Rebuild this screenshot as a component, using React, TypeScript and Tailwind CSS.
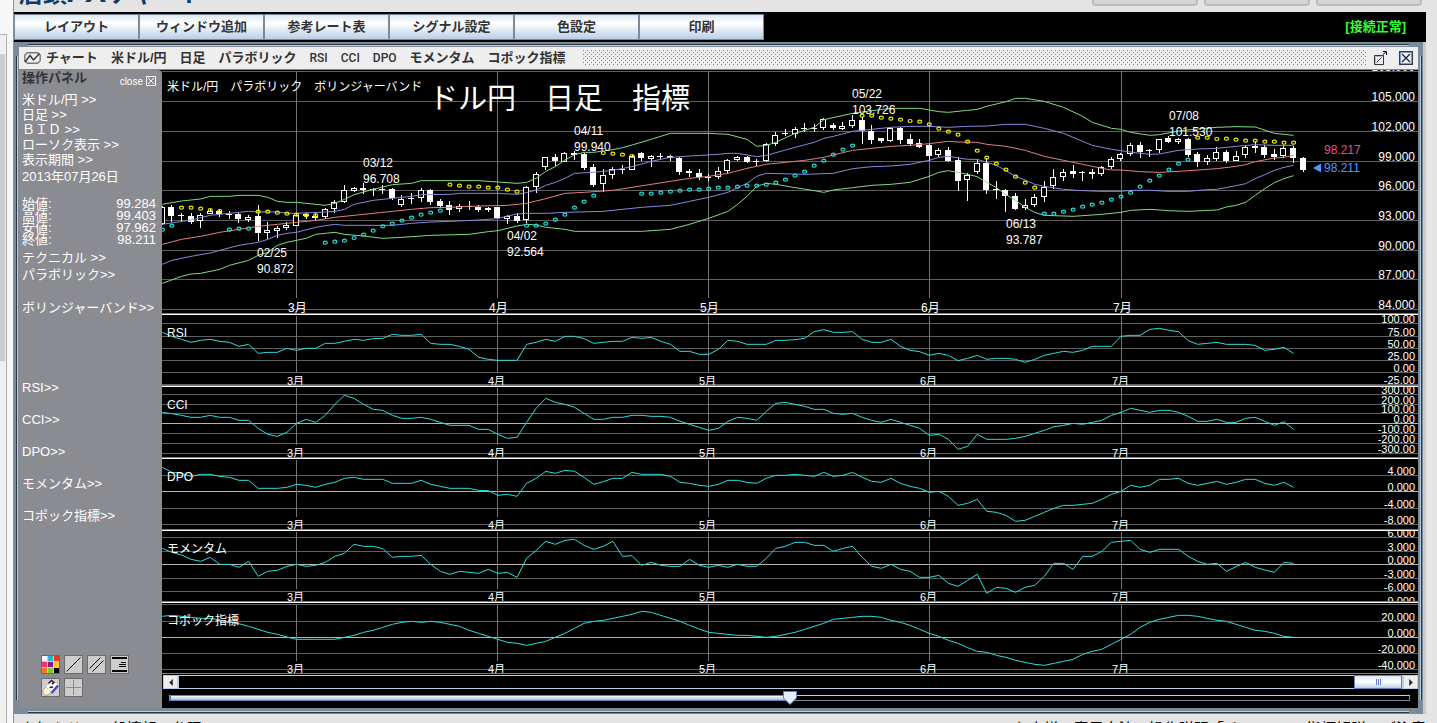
import React, { useState } from 'react';

type Candle = [high: number, low: number, top: number, bottom: number, filled: 0 | 1];
type Point = [bar: number, y: number];

interface Grid {
  y: number;
  label: string;
  strong?: boolean;
}

interface Indicator {
  name: string;
  base: number;
  grid: Grid[];
  samples: number[];
}

// Horizontal position of a daily bar. All chart samples are stored in thirds of a pixel.
const barX = (i: number) => 0.3 + i * 9.587;

const months = [
  { label: '3月', x: 134 },
  { label: '4月', x: 335 },
  { label: '5月', x: 546 },
  { label: '6月', x: 767 },
  { label: '7月', x: 959 },
];

const priceGrid: Grid[] = [
  { y: 1, label: '108.000' },
  { y: 31, label: '105.000' },
  { y: 61, label: '102.000' },
  { y: 91, label: '99.000' },
  { y: 120, label: '96.000' },
  { y: 150, label: '93.000' },
  { y: 180, label: '90.000' },
  { y: 209, label: '87.000' },
  { y: 239, label: '84.000' },
];

const candles: Candle[] = [
  [408, 466, 410, 460, 0], [405, 455, 410, 437, 1], [428, 452, 436, 440, 1], [430, 462, 438, 455, 1],
  [430, 475, 436, 455, 0], [418, 432, 422, 431, 0], [418, 442, 424, 434, 1], [424, 448, 433, 437, 1],
  [428, 457, 433, 448, 1], [434, 455, 440, 449, 0], [406, 514, 438, 488, 1], [455, 505, 480, 488, 0],
  [469, 505, 475, 484, 0], [457, 481, 466, 475, 0], [430, 470, 434, 466, 0], [428, 445, 433, 440, 1],
  [430, 455, 438, 444, 1], [414, 448, 418, 443, 0], [390, 428, 397, 418, 0], [346, 400, 361, 397, 0],
  [350, 366, 355, 364, 0], [340, 374, 355, 361, 1], [355, 380, 357, 361, 1], [346, 374, 356, 360, 1],
  [355, 390, 358, 386, 1], [374, 411, 386, 404, 0], [370, 404, 383, 387, 1], [355, 397, 361, 386, 0],
  [358, 405, 361, 396, 1], [388, 416, 392, 408, 1], [394, 437, 405, 420, 1], [403, 426, 409, 418, 0],
  [394, 421, 407, 410, 1], [405, 425, 411, 420, 1], [410, 424, 414, 420, 1], [410, 446, 411, 445, 1],
  [436, 462, 439, 447, 0], [430, 460, 437, 453, 1], [349, 460, 352, 452, 0], [307, 370, 313, 352, 0],
  [260, 300, 262, 292, 0], [252, 287, 262, 275, 1], [247, 276, 249, 275, 0], [244, 272, 249, 254, 1],
  [250, 300, 252, 293, 1], [282, 352, 292, 345, 1], [298, 368, 316, 344, 0], [290, 325, 298, 317, 0],
  [286, 313, 296, 300, 1], [254, 300, 257, 298, 0], [246, 274, 250, 266, 1], [255, 290, 258, 267, 0],
  [250, 268, 259, 262, 1], [255, 273, 259, 265, 1], [262, 316, 264, 305, 1], [298, 322, 304, 310, 1],
  [298, 331, 310, 323, 1], [313, 333, 321, 325, 1], [292, 328, 304, 323, 0], [266, 308, 271, 304, 0],
  [258, 273, 262, 270, 0], [258, 278, 261, 275, 1], [266, 287, 273, 276, 1], [220, 278, 223, 275, 0],
  [185, 226, 196, 223, 0], [178, 200, 188, 192, 1], [172, 206, 176, 191, 0], [160, 188, 173, 177, 1],
  [163, 187, 173, 177, 1], [145, 180, 148, 176, 0], [158, 180, 166, 176, 1], [157, 182, 169, 177, 0],
  [136, 175, 151, 170, 0], [140, 222, 151, 185, 1], [166, 222, 183, 210, 1], [205, 220, 205, 215, 1],
  [170, 216, 175, 214, 0], [170, 222, 174, 210, 1], [193, 230, 207, 222, 1], [208, 235, 220, 233, 1],
  [222, 273, 225, 258, 1], [234, 262, 241, 256, 0], [230, 274, 240, 272, 1], [262, 364, 270, 332, 1],
  [310, 394, 316, 331, 0], [266, 310, 280, 307, 0], [265, 372, 280, 362, 1], [334, 388, 358, 362, 1],
  [358, 428, 361, 380, 1], [370, 422, 378, 416, 1], [386, 418, 406, 416, 0], [372, 412, 382, 407, 0],
  [334, 397, 352, 383, 0], [296, 355, 322, 350, 0], [298, 335, 307, 322, 0], [286, 325, 303, 312, 1],
  [303, 334, 307, 311, 1], [296, 325, 307, 312, 1], [288, 317, 291, 311, 0], [260, 296, 268, 293, 0],
  [248, 272, 253, 269, 0], [220, 260, 226, 254, 0], [217, 265, 225, 246, 1], [236, 260, 240, 244, 1],
  [206, 248, 208, 242, 0], [198, 220, 204, 215, 1], [203, 220, 207, 216, 0], [205, 262, 207, 255, 1],
  [247, 293, 252, 275, 1], [254, 284, 264, 275, 0], [230, 272, 247, 267, 0], [240, 278, 246, 272, 1],
  [244, 274, 257, 272, 0], [224, 262, 232, 257, 0], [214, 250, 229, 234, 1], [226, 266, 231, 254, 1],
  [238, 270, 252, 260, 1], [226, 264, 235, 260, 0], [228, 278, 235, 266, 1], [261, 306, 264, 300, 1],
];

const bands: { color: string; points: Point[] }[] = [
  {
    color: '#7fdc7f',
    points: [
      [0, 403], [2, 393], [4, 387], [5, 379], [7, 379], [8, 376], [10, 376], [11, 382], [12, 394], [13, 397],
      [14, 397], [17, 406], [18, 400], [19, 388], [20, 374], [22, 358], [24, 344], [26, 340], [27, 332], [33, 332],
      [35, 336], [37, 340], [38, 337], [39, 325], [40, 304], [41, 290], [42, 270], [43, 254], [44, 247], [45, 247],
      [47, 239], [48, 233], [49, 225], [51, 208], [53, 190], [57, 190], [59, 193], [61, 208], [62, 229], [63, 226],
      [64, 217], [66, 190], [68, 172], [69, 149], [72, 130], [74, 122], [76, 115], [79, 115], [81, 125], [82, 127],
      [84, 121], [85, 118], [86, 109], [88, 95], [89, 85], [90, 85], [92, 94], [94, 112], [96, 139], [97, 157],
      [99, 175], [100, 178], [101, 187], [103, 196], [104, 194], [106, 183], [108, 177], [110, 172], [112, 170],
      [114, 171], [116, 190], [118, 196],
    ],
  },
  {
    color: '#8888e0',
    points: [
      [0, 463], [3, 450], [5, 436], [6, 433], [8, 427], [9, 424], [10, 426], [12, 426], [13, 430], [14, 430],
      [17, 426], [18, 424], [19, 418], [20, 403], [22, 391], [24, 385], [26, 379], [27, 374], [30, 373], [31, 370],
      [35, 370], [37, 373], [38, 368], [39, 360], [40, 346], [41, 337], [42, 325], [43, 310], [45, 307], [47, 301],
      [49, 290], [51, 274], [53, 262], [55, 258], [58, 253], [59, 250], [60, 250], [62, 260], [63, 256], [65, 240],
      [66, 232], [68, 217], [69, 205], [70, 199], [72, 184], [74, 178], [76, 172], [78, 169], [80, 169], [82, 172],
      [84, 169], [86, 168], [88, 163], [90, 163], [92, 175], [94, 190], [96, 214], [97, 226], [99, 238], [100, 242],
      [102, 250], [103, 253], [104, 252], [106, 241], [108, 237], [110, 235], [112, 229], [114, 224], [116, 226],
      [118, 226],
    ],
  },
  {
    color: '#e08080',
    points: [
      [0, 523], [2, 508], [4, 499], [6, 487], [8, 478], [10, 469], [12, 463], [14, 457], [16, 451], [18, 442],
      [20, 436], [22, 430], [24, 424], [26, 418], [28, 413], [30, 412], [32, 409], [36, 406], [38, 400], [40, 386],
      [42, 370], [44, 367], [47, 361], [49, 352], [51, 343], [53, 334], [55, 325], [57, 319], [59, 310], [61, 295],
      [63, 283], [65, 277], [67, 271], [69, 262], [72, 241], [74, 235], [76, 229], [78, 226], [80, 221], [82, 214],
      [83, 216], [85, 217], [86, 223], [88, 229], [90, 241], [92, 259], [94, 271], [96, 283], [98, 295], [99, 300],
      [100, 300], [102, 305], [104, 307], [106, 304], [108, 300], [110, 296], [112, 289], [113, 284], [114, 275],
      [116, 264], [117, 262], [118, 256],
    ],
  },
  {
    color: '#8888e0',
    points: [
      [0, 583], [1, 571], [3, 559], [5, 549], [6, 541], [8, 526], [10, 517], [11, 508], [12, 496], [13, 490],
      [14, 487], [16, 472], [17, 467], [18, 463], [19, 466], [24, 466], [26, 460], [28, 456], [30, 454], [33, 450],
      [35, 446], [36, 438], [37, 432], [38, 430], [40, 430], [42, 427], [46, 424], [50, 412], [53, 406], [55, 394],
      [57, 382], [59, 367], [60, 353], [61, 340], [62, 319], [63, 310], [67, 313], [70, 310], [72, 296], [74, 290],
      [76, 288], [78, 283], [80, 271], [81, 262], [82, 259], [84, 268], [85, 268], [86, 277], [87, 286], [88, 302],
      [89, 319], [90, 330], [91, 343], [92, 349], [94, 358], [96, 362], [98, 364], [100, 364], [101, 361],
      [103, 361], [105, 364], [107, 364], [109, 359], [110, 358], [112, 347], [113, 341], [114, 326], [115, 314],
      [116, 301], [117, 292], [118, 286],
    ],
  },
  {
    color: '#7fdc7f',
    points: [
      [0, 640], [2, 619], [3, 612], [4, 610], [6, 598], [7, 586], [9, 571], [10, 556], [11, 547], [12, 526],
      [13, 517], [15, 505], [16, 493], [17, 490], [18, 487], [19, 493], [21, 498], [23, 505], [25, 502], [28, 496],
      [32, 493], [34, 485], [35, 482], [37, 468], [38, 463], [39, 465], [40, 472], [42, 478], [43, 484], [50, 484],
      [53, 478], [55, 463], [57, 445], [59, 424], [60, 403], [61, 379], [62, 349], [63, 340], [64, 343], [66, 353],
      [68, 362], [69, 367], [70, 360], [72, 353], [74, 346], [76, 343], [78, 337], [80, 319], [81, 307], [82, 302],
      [84, 313], [85, 320], [86, 337], [87, 353], [88, 374], [89, 391], [90, 412], [91, 427], [92, 436], [95, 439],
      [98, 433], [100, 427], [101, 421], [103, 418], [105, 422], [107, 424], [110, 420], [111, 411], [112, 406],
      [113, 397], [114, 376], [115, 356], [116, 338], [117, 326], [118, 317],
    ],
  },
];

// Parabolic SAR runs: first bar, colour and the following readings
const sarRuns: { start: number; color: string; values: number[] }[] = [
  { start: 0, color: '#22e0e0', values: [479, 467] },
  { start: 2, color: '#f0f000', values: [413, 413, 416, 420, 423] },
  { start: 7, color: '#22e0e0', values: [479, 476, 476] },
  { start: 10, color: '#f0f000', values: [425, 425, 428, 431, 434, 436, 436] },
  { start: 17, color: '#22e0e0', values: [518, 515, 512, 504, 494, 482, 469, 461, 452, 443, 434, 428, 422] },
  { start: 30, color: '#f0f000', values: [344, 347, 350, 350, 353, 353, 359, 365] },
  { start: 38, color: '#22e0e0', values: [467, 467, 461, 449, 434, 413, 395, 377] },
  { start: 46, color: '#f0f000', values: [249, 251, 254, 258] },
  {
    start: 50,
    color: '#22e0e0',
    values: [
      371, 371, 368, 365, 362, 359, 359, 356, 353, 353, 350, 347, 347, 344, 338, 329, 317, 305, 287, 272, 254, 239, 227,
    ],
  },
  {
    start: 73,
    color: '#f0f000',
    values: [137, 137, 143, 146, 149, 153, 155, 163, 176, 185, 194, 215, 242, 263, 281, 299, 320, 338, 353],
  },
  {
    start: 92,
    color: '#22e0e0',
    values: [431, 431, 425, 419, 410, 404, 398, 389, 380, 368, 350, 332, 317, 299, 281, 269],
  },
  { start: 108, color: '#f0f000', values: [203, 203, 207, 206, 209, 212, 212, 215, 215, 218, 218] },
];

const peaks = [
  { x: 95, y: 187, date: '02/25', price: '90.872' },
  { x: 201, y: 97, date: '03/12', price: '96.708' },
  { x: 345, y: 170, date: '04/02', price: '92.564' },
  { x: 412, y: 65, date: '04/11', price: '99.940' },
  { x: 690, y: 28, date: '05/22', price: '103.726' },
  { x: 844, y: 158, date: '06/13', price: '93.787' },
  { x: 1007, y: 50, date: '07/08', price: '101.530' },
];

const indicators: Indicator[] = [
  {
    name: 'RSI',
    base: 15,
    grid: [
      { y: 8, label: '100.00' },
      { y: 21, label: '75.00' },
      { y: 33, label: '50.00' },
      { y: 45, label: '25.00' },
      { y: 57, label: '0.00' },
      { y: 69, label: '-25.00' },
    ],
    samples: [
      67, 79, 88, 97, 91, 88, 94, 97, 109, 103, 130, 127, 127, 115, 121, 115, 115, 100, 100, 94, 88, 91, 86, 85, 73,
      76, 76, 73, 100, 103, 103, 109, 118, 142, 148, 151, 151, 151, 103, 97, 88, 94, 79, 79, 86, 100, 97, 94, 94, 82,
      85, 82, 94, 103, 124, 124, 133, 133, 118, 91, 94, 103, 103, 103, 91, 91, 89, 85, 65, 59, 67, 67, 65, 88, 97, 97,
      88, 109, 121, 125, 136, 130, 136, 152, 145, 136, 148, 145, 145, 148, 157, 148, 136, 130, 124, 127, 121, 109, 109,
      109, 79, 76, 76, 58, 55, 61, 65, 92, 103, 100, 97, 103, 103, 103, 106, 121, 118, 112, 130,
    ],
  },
  {
    name: 'CCI',
    base: 231,
    grid: [
      { y: 7, label: '300.00' },
      { y: 17, label: '200.00' },
      { y: 26, label: '100.00' },
      { y: 36, label: '0.00', strong: true },
      { y: 46, label: '-100.00' },
      { y: 56, label: '-200.00' },
      { y: 66, label: '-300.00' },
    ],
    samples: [
      307, 311, 316, 322, 322, 316, 322, 322, 331, 331, 355, 373, 379, 367, 340, 328, 337, 316, 283, 256, 265, 283,
      298, 301, 316, 325, 325, 322, 328, 337, 346, 346, 346, 358, 358, 373, 385, 382, 337, 295, 265, 277, 283, 292,
      310, 328, 328, 322, 322, 316, 316, 319, 319, 322, 334, 343, 352, 361, 355, 334, 322, 325, 331, 304, 280, 277,
      283, 289, 298, 298, 310, 313, 310, 322, 331, 337, 328, 337, 346, 355, 376, 373, 388, 418, 409, 373, 388, 388,
      388, 385, 379, 370, 361, 350, 346, 340, 343, 337, 331, 316, 307, 295, 301, 307, 301, 301, 307, 319, 334, 334,
      328, 337, 337, 325, 322, 334, 346, 335, 358,
    ],
  },
  {
    name: 'DPO',
    base: 447,
    grid: [
      { y: 16, label: '4.000' },
      { y: 32, label: '0.000', strong: true },
      { y: 49, label: '-4.000' },
      { y: 65, label: '-8.000' },
    ],
    samples: [
      472, 487, 490, 499, 493, 493, 499, 502, 511, 511, 535, 535, 535, 532, 523, 526, 532, 523, 517, 505, 502, 508,
      508, 508, 520, 520, 520, 511, 523, 529, 535, 535, 535, 541, 542, 556, 553, 559, 520, 505, 484, 490, 481, 484,
      502, 523, 515, 505, 505, 487, 493, 493, 493, 499, 517, 520, 526, 529, 523, 511, 511, 517, 520, 505, 496, 496,
      493, 496, 499, 487, 499, 496, 487, 502, 514, 517, 505, 520, 529, 535, 547, 544, 559, 586, 580, 568, 604, 607,
      616, 634, 631, 619, 607, 595, 586, 586, 583, 580, 568, 553, 544, 526, 532, 526, 508, 508, 505, 520, 526, 520,
      514, 523, 517, 508, 508, 520, 526, 517, 532,
    ],
  },
  {
    name: 'モメンタム',
    base: 663,
    grid: [
      { y: 6, label: '6.000' },
      { y: 20, label: '3.000' },
      { y: 33, label: '0.000', strong: true },
      { y: 47, label: '-3.000' },
      { y: 60, label: '-6.000' },
      { y: 74, label: '-9.000' },
    ],
    samples: [
      715, 727, 735, 748, 754, 742, 763, 763, 772, 754, 799, 784, 781, 769, 763, 769, 766, 757, 739, 730, 703, 709,
      709, 716, 742, 739, 739, 736, 763, 784, 793, 784, 787, 790, 778, 790, 787, 802, 745, 721, 694, 703, 691, 688,
      706, 718, 709, 694, 739, 737, 766, 757, 766, 769, 769, 748, 766, 772, 766, 772, 763, 769, 769, 745, 715, 709,
      697, 697, 706, 706, 724, 715, 709, 742, 769, 775, 763, 778, 784, 802, 802, 796, 820, 829, 811, 793, 850, 832,
      835, 847, 832, 826, 799, 760, 760, 778, 739, 739, 724, 697, 694, 691, 718, 727, 718, 718, 718, 739, 754, 763,
      760, 784, 770, 757, 772, 780, 787, 757, 760,
    ],
  },
  {
    name: 'コポック指標',
    base: 879,
    grid: [
      { y: 1, label: '' },
      { y: 18, label: '20.000' },
      { y: 34, label: '0.000', strong: true },
      { y: 50, label: '-20.000' },
      { y: 66, label: '-40.000' },
    ],
    samples: [
      919, 916, 919, 922, 925, 925, 930, 937, 941, 949, 958, 967, 973, 981, 988, 988, 988, 988, 988, 982, 976, 967,
      961, 952, 943, 937, 934, 937, 934, 937, 943, 949, 961, 970, 979, 988, 997, 1000, 1006, 1000, 994, 982, 970, 955,
      940, 934, 931, 925, 919, 913, 904, 907, 916, 925, 934, 946, 957, 967, 970, 973, 976, 976, 979, 982, 979, 973,
      967, 958, 949, 940, 928, 925, 922, 919, 919, 922, 931, 937, 946, 958, 970, 979, 991, 1000, 1013, 1024, 1027,
      1036, 1042, 1051, 1057, 1063, 1066, 1060, 1054, 1048, 1033, 1024, 1018, 1003, 988, 973, 952, 937, 928, 922, 916,
      916, 919, 925, 931, 934, 943, 952, 961, 964, 970, 979, 982,
    ],
  },
];

const toolbar = ['レイアウト', 'ウィンドウ追加', '参考レート表', 'シグナル設定', '色設定', '印刷'];

const menu = ['チャート', '米ドル/円', '日足', 'パラボリック', 'RSI', 'CCI', 'DPO', 'モメンタム', 'コポック指標'];

const prices = [
  ['始値:', '99.284'],
  ['高値:', '99.403'],
  ['安値:', '97.962'],
  ['終値:', '98.211'],
];

const GridLines: React.FC<{ grid: Grid[]; monthEnd: number }> = ({ grid, monthEnd }) => (
  <g shapeRendering="crispEdges">
    {grid.map((g) => (
      <rect key={g.y} x="0" y={g.y} width="100%" height="1" fill={g.strong ? '#b4b4b4' : '#5f5f5f'} />
    ))}
    {months.map((m) => (
      <rect key={m.label} x={m.x} y="1" width="1" height={monthEnd} fill="#747474" />
    ))}
  </g>
);

const AxisLabels: React.FC<{ grid: Grid[] }> = ({ grid }) => (
  <g textAnchor="end">
    {grid.map((g) => (
      <text key={g.y} x="100%" dx="-3" y={g.y}>
        {g.label}
      </text>
    ))}
  </g>
);

const PriceChart: React.FC = () => (
  <div className="relative h-[244px] border-b border-[#5c7cc4]">
    <svg className="block h-full w-full fill-white text-xs">
      <GridLines grid={priceGrid} monthEnd={227} />
      <g shapeRendering="crispEdges">
        {candles.map(([high, low, top, bottom, filled], i) => {
          const x = Math.floor(barX(i));
          const y = Math.round(top / 3);
          const h = Math.max(1, Math.round((bottom - top) / 3));
          return (
            <g key={i}>
              <rect x={x} y={Math.round(high / 3)} width="1" height={Math.round((low - high) / 3)} />
              <rect x={x - 3} y={y} width="6" height={h} />
              {!filled && h > 2 && <rect x={x - 2} y={y + 1} width="4" height={h - 2} fill="#000" />}
            </g>
          );
        })}
      </g>
      <g fill="none" strokeWidth="1">
        {bands.map((band, i) => (
          <polyline
            key={i}
            stroke={band.color}
            points={band.points.map(([bar, y]) => `${barX(bar)},${y / 3}`).join(' ')}
          />
        ))}
        {sarRuns.map((run) =>
          run.values.map((v, i) => (
            <ellipse
              key={`${run.start}-${i}`}
              cx={barX(run.start + i)}
              cy={v / 3}
              rx="2"
              ry="1.5"
              stroke={run.color}
              strokeWidth="1.2"
            />
          )),
        )}
      </g>
      <text x="5" y="21">米ドル/円　パラボリック　ボリンジャーバンド</text>
      {peaks.map((p) => (
        <g key={p.date}>
          <text x={p.x} y={p.y}>{p.date}</text>
          <text x={p.x} y={p.y + 16}>{p.price}</text>
        </g>
      ))}
      {months.map((m) => (
        <text key={m.label} x={m.x - 8} y="242">{m.label}</text>
      ))}
      <AxisLabels grid={priceGrid} />
      <text x="1162" y="84" fill="#e0508c">98.217</text>
      <path d="M1151 98 L1159 93.5 V102.5 Z" fill="#5098ff" />
      <text x="1162" y="102" fill="#5098ff">98.211</text>
    </svg>
    <h1 className="absolute left-[267px] top-[9px] text-[29px] leading-10 whitespace-nowrap text-white">
      ドル円　日足　指標
    </h1>
  </div>
);

const IndicatorChart: React.FC<{ data: Indicator }> = ({ data }) => (
  <div className="h-[72px] border-t border-b border-t-white border-b-[#5c7cc4]">
    <svg className="block h-full w-full fill-white text-[11px]">
      <GridLines grid={data.grid} monthEnd={57} />
      <polyline
        fill="none"
        stroke="#2fdcdc"
        points={data.samples.map((v, i) => `${barX(i)},${(v - data.base) / 3}`).join(' ')}
      />
      <text x="5" y="22" className="text-xs">{data.name}</text>
      {months.map((m) => (
        <text key={m.label} x={m.x - 9} y="70">{m.label}</text>
      ))}
      <AxisLabels grid={data.grid} />
    </svg>
  </div>
);

const ScrollArea: React.FC = () => {
  const [value, setValue] = useState(50);

  return (
    <div className="flex h-[34px] flex-col bg-black pt-px">
      <div className="flex h-[14px] pl-px">
        <button
          aria-label="前へ"
          className="flex w-[15px] items-center justify-center border border-[#b8cfe5] bg-[#eeeeee]"
        >
          <svg viewBox="0 0 4 8" className="h-[7px] w-1"><path d="M4 0 L0 4 L4 8 Z" fill="#222" /></svg>
        </button>
        <div className="flex flex-1 justify-end border border-[#b8cfe5]">
          <div className="-my-px flex w-12 items-center justify-center gap-px border border-[#6382bf] bg-linear-to-b from-[#dbe7f3] via-white to-[#b8cfe5]">
            <span className="h-[6px] w-px bg-[#6382bf]" />
            <span className="h-[6px] w-px bg-[#6382bf]" />
            <span className="h-[6px] w-px bg-[#6382bf]" />
          </div>
        </div>
        <button
          aria-label="次へ"
          className="flex w-[15px] items-center justify-center border border-[#b8cfe5] bg-[#eeeeee]"
        >
          <svg viewBox="0 0 4 8" className="h-[7px] w-1"><path d="M0 0 L4 4 L0 8 Z" fill="#222" /></svg>
        </button>
      </div>
      <div className="relative mt-[6px] mr-2 ml-[7px] h-[6px] border border-[#7a8a99] border-t-[#b8cfe5]">
        <div
          className="-mt-px h-[6px] border border-[#6382bf] bg-linear-to-b from-white to-[#a3b8d4]"
          style={{ width: `${value}%` }}
        />
        <svg
          viewBox="0 0 14 14"
          className="absolute -top-[5px] -ml-[7px] h-[14px] w-[14px]"
          style={{ left: `${value}%` }}
        >
          <path d="M0.5 0.5 H13.5 V7 L7 13.5 L0.5 7 Z" fill="#e6eef6" stroke="#6382bf" />
        </svg>
        <input
          type="range"
          aria-label="表示位置"
          value={value}
          onChange={(e) => setValue(Number(e.target.value))}
          className="absolute -top-1 left-0 h-3 w-full opacity-0"
        />
      </div>
    </div>
  );
};

const ToolButton: React.FC<{ label: string; children: React.ReactNode }> = ({ label, children }) => (
  <button aria-label={label} className="h-[19px] w-[19px] border border-[#6b6b6b] bg-[#cdcdcd]">
    <svg viewBox="0 0 17 17" className="block h-full w-full" fill="none">
      {children}
    </svg>
  </button>
);

const palette = ['#ffffff', '#2fb0cc', '#e83a20', '#f0307a', '#8a1a8a', '#ffc830', '#f07a20', '#88c430', '#000000'];

const SidePanel: React.FC = () => (
  <aside className="flex w-[143px] shrink-0 flex-col rounded-tr-sm bg-[#8b8c91] pl-[3px] text-[13px] text-white">
    <div className="flex h-[22px] justify-between pr-[6px]">
      <h2 className="leading-4 font-bold text-[#333]">操作パネル</h2>
      <button className="flex items-center gap-[3px] text-[10px]">
        close
        <svg viewBox="0 0 10 10" className="h-[10px] w-[10px]" fill="none" stroke="#fff">
          <path d="M0.5 0.5 H9.5 V9.5 H0.5 Z M2 2 L8 8 M8 2 L2 8" />
        </svg>
      </button>
    </div>
    {['米ドル/円 >>', '日足 >>', 'ＢＩＤ >>', 'ローソク表示 >>', '表示期間 >>'].map((t) => (
      <button key={t} className="h-[15px] text-left leading-[15px]">{t}</button>
    ))}
    <p className="h-5 leading-5">2013年07月26日</p>
    <dl className="mt-[11px] mr-[6px]">
      {prices.map(([name, value]) => (
        <div key={name} className="flex h-3 justify-between leading-3">
          <dt>{name}</dt>
          <dd>{value}</dd>
        </div>
      ))}
    </dl>
    <button className="mt-[3px] h-[17px] text-left leading-[17px]">テクニカル &gt;&gt;</button>
    <button className="h-[17px] text-left leading-[17px]">パラボリック&gt;&gt;</button>
    <button className="mt-4 h-[17px] text-left leading-[17px] whitespace-nowrap">ボリンジャーバンド&gt;&gt;</button>
    <div className="mt-[63px] flex flex-col items-start gap-[15px]">
      {indicators.map((ind) => (
        <button key={ind.name} className="h-[17px] leading-[17px]">{ind.name}&gt;&gt;</button>
      ))}
    </div>
    <div className="mt-auto mb-[11px] ml-[19px] flex w-[92px] flex-wrap gap-1">
      <ToolButton label="色">
        {palette.map((c, i) => (
          <rect key={c} x={(i % 3) * 6} y={Math.floor(i / 3) * 6} width="5" height="5" fill={c} />
        ))}
      </ToolButton>
      <ToolButton label="直線">
        <path d="M1.5 15.5 L15.5 1.5" stroke="#000" />
      </ToolButton>
      <ToolButton label="平行線">
        <path d="M1.5 12.5 L12.5 1.5 M4.5 15.5 L15.5 4.5" stroke="#000" />
      </ToolButton>
      <ToolButton label="線種">
        <path d="M1 2 H16 M1 15 H16" stroke="#000" strokeWidth="2" />
        <path d="M10 6.5 H15 M8 8.5 H15 M8 10.5 H15" stroke="#000" />
      </ToolButton>
      <ToolButton label="消去">
        <path d="M1 11 L4 8 L9 13 L6 16 H3 L1 14 Z" fill="#fff4d8" stroke="#a08850" strokeWidth="0.6" />
        <path d="M4 8 L10.5 1 L16 6 L9 13 Z" fill="#fff" />
        <path d="M6.5 4.5 L9.5 1.5 L12 3.5 L10 5 M7.5 8.5 L11 8" stroke="#222" strokeWidth="1.6" />
        <path d="M16 6.5 L9.5 14" stroke="#4848a8" strokeWidth="2.4" />
      </ToolButton>
      <ToolButton label="十字線">
        <path d="M8.5 1 V16 M1 8.5 H16" stroke="#1eb0ee" />
      </ToolButton>
    </div>
  </aside>
);

const WindowHeader: React.FC = () => (
  <div className="flex h-[23px] items-center border-b border-[#7a8a99] bg-[#eeeeee] pl-[5px] text-[#333]">
    <svg viewBox="0 0 17 12" className="mr-[5px] h-3 w-[17px] shrink-0" fill="none" stroke="#777" strokeWidth="1.4">
      <path d="M3.5 0.8 H13.5 L16.2 3 V9 L13.5 11.2 H3.5 L0.8 9 V3 Z" />
      <path d="M1 10 L6 3.5 L9.5 8 L15.5 1.5" stroke="#333" />
    </svg>
    <nav className="flex shrink-0 items-center gap-[13px] text-[13px] font-bold whitespace-nowrap">
      {menu.map((m) => (
        <button key={m} className={/^[A-Z]+$/.test(m) ? 'font-[Roboto] text-xs font-medium' : ''}>{m}</button>
      ))}
    </nav>
    <svg className="mr-[7px] ml-[17px] h-4 min-w-0 flex-1" shapeRendering="crispEdges">
      <defs>
        <pattern id="grip" width="4" height="4" patternUnits="userSpaceOnUse">
          <rect width="1" height="1" fill="#7a8a99" />
          <rect x="2" y="2" width="1" height="1" fill="#7a8a99" />
        </pattern>
      </defs>
      <rect width="100%" height="100%" fill="url(#grip)" />
    </svg>
    <button aria-label="別ウィンドウ">
      <svg viewBox="0 0 13 14" className="h-[14px] w-[13px]" fill="none" stroke="#333">
        <path d="M0.5 4.5 H9.5 V13.5 H0.5 Z M2.5 11.5 L7.5 6.5" />
        <path d="M9 3.5 L12 0.8 M9 0.5 H12.5 V4" stroke="#000" />
        <path d="M1.5 12.5 V5.5 H8.5" stroke="#a8bcd8" />
      </svg>
    </button>
    <button aria-label="閉じる" className="mr-[5px] ml-3">
      <svg viewBox="0 0 14 14" className="h-[14px] w-[14px]" fill="none">
        <rect x="1" y="1" width="12" height="12" fill="#e8f0fa" stroke="#4f6fb0" strokeWidth="1.4" />
        <rect x="0.5" y="0.5" width="13" height="13" stroke="#333a50" />
        <path d="M3 3 L11 11 M11 3 L3 11" stroke="#222" strokeWidth="1.2" />
      </svg>
    </button>
  </div>
);

const App: React.FC = () => {
  return (
    <div className="flex h-screen overflow-hidden bg-[#e4e4e4] font-['Liberation_Sans','Noto_Sans_CJK_JP',sans-serif]">
      <div className="flex w-[14px] shrink-0 flex-col border-r border-[#909090] bg-[#f7f7f7]">
        <div className="mt-[34px] mr-[6px] flex-1 border-t border-r border-[#b0b0b0] bg-[#f0f0f0]">
          <div className="mt-[19px] mr-px h-[307px] bg-[#cdcdcd]" />
        </div>
      </div>

      <div className="mr-[11px] flex min-w-0 flex-1 flex-col">
        <header className="flex h-3 items-start justify-between overflow-hidden pr-1 pl-[5px]">
          <p className="-mt-[26px] text-2xl leading-10 font-bold whitespace-nowrap text-[#0b3a6b]">
            店頭<i className="text-[32px] leading-none">FX</i>チャート
          </p>
          <div className="flex gap-[6px]">
            <span className="h-[6px] w-[106px] rounded-b-sm border-2 border-t-0 border-[#bcbcbc] bg-[#d4d4d4]" />
            <span className="h-[6px] w-[106px] rounded-b-sm border-2 border-t-0 border-[#bcbcbc] bg-[#d4d4d4]" />
            <span className="h-[6px] w-[106px] rounded-b-sm border-2 border-t-0 border-[#bcbcbc] bg-[#d4d4d4]" />
          </div>
        </header>

        <div className="flex h-[30px] items-center justify-between bg-black pr-5">
          <div className="flex">
            {toolbar.map((t) => (
              <button
                key={t}
                className="h-[26px] w-[125px] border border-[#7a8a99] bg-linear-to-b from-[#dde8f3] via-white via-35% to-[#b8cfe5] text-[13px] leading-6 font-bold text-[#333]"
              >
                {t}
              </button>
            ))}
          </div>
          <span className="text-[13px] font-bold text-[#33ff33]">[接続正常]</span>
        </div>

        <div className="flex flex-1 bg-[#cacaca] pr-[3px]">
          <main className="relative flex min-w-0 flex-1 bg-[#7a8a99] pt-[2px] pr-px pb-px pl-[2px]">
            <div className="flex min-w-0 flex-1 border border-[#2c3440]">
              <div className="flex min-w-0 flex-1 border border-[#b8cfe5] bg-[#7a8a99] pt-px pr-[2px] pb-[3px] pl-px">
                <section className="relative z-10 flex min-w-0 flex-1 flex-col bg-black">
                  <WindowHeader />
                  <div className="flex flex-1">
                    <SidePanel />
                    <div className="min-w-0 flex-1 overflow-hidden bg-black">
                      <PriceChart />
                      {indicators.map((ind) => (
                        <IndicatorChart key={ind.name} data={ind} />
                      ))}
                      <ScrollArea />
                    </div>
                  </div>
                </section>
              </div>
            </div>
            <span className="absolute top-0 left-0 h-[14px] w-[14px] bg-[#7a8a99]" />
            <span className="absolute top-0 right-0 h-[14px] w-[14px] bg-[#7a8a99]" />
            <span className="absolute bottom-0 left-0 h-[14px] w-[14px] bg-[#7a8a99]" />
            <span className="absolute right-0 bottom-0 h-[14px] w-[14px] bg-[#7a8a99]" />
          </main>
        </div>

        <footer className="flex h-[9px] justify-between overflow-hidden pt-[5px] pl-2 text-[15px] leading-5 whitespace-nowrap text-black">
          <p>お知らせ：一般情報の参照</p>
          <p>お客様の表示方法、操作説明「チャート」、指標解説、ご注意</p>
        </footer>
      </div>
    </div>
  );
};

export default App;
